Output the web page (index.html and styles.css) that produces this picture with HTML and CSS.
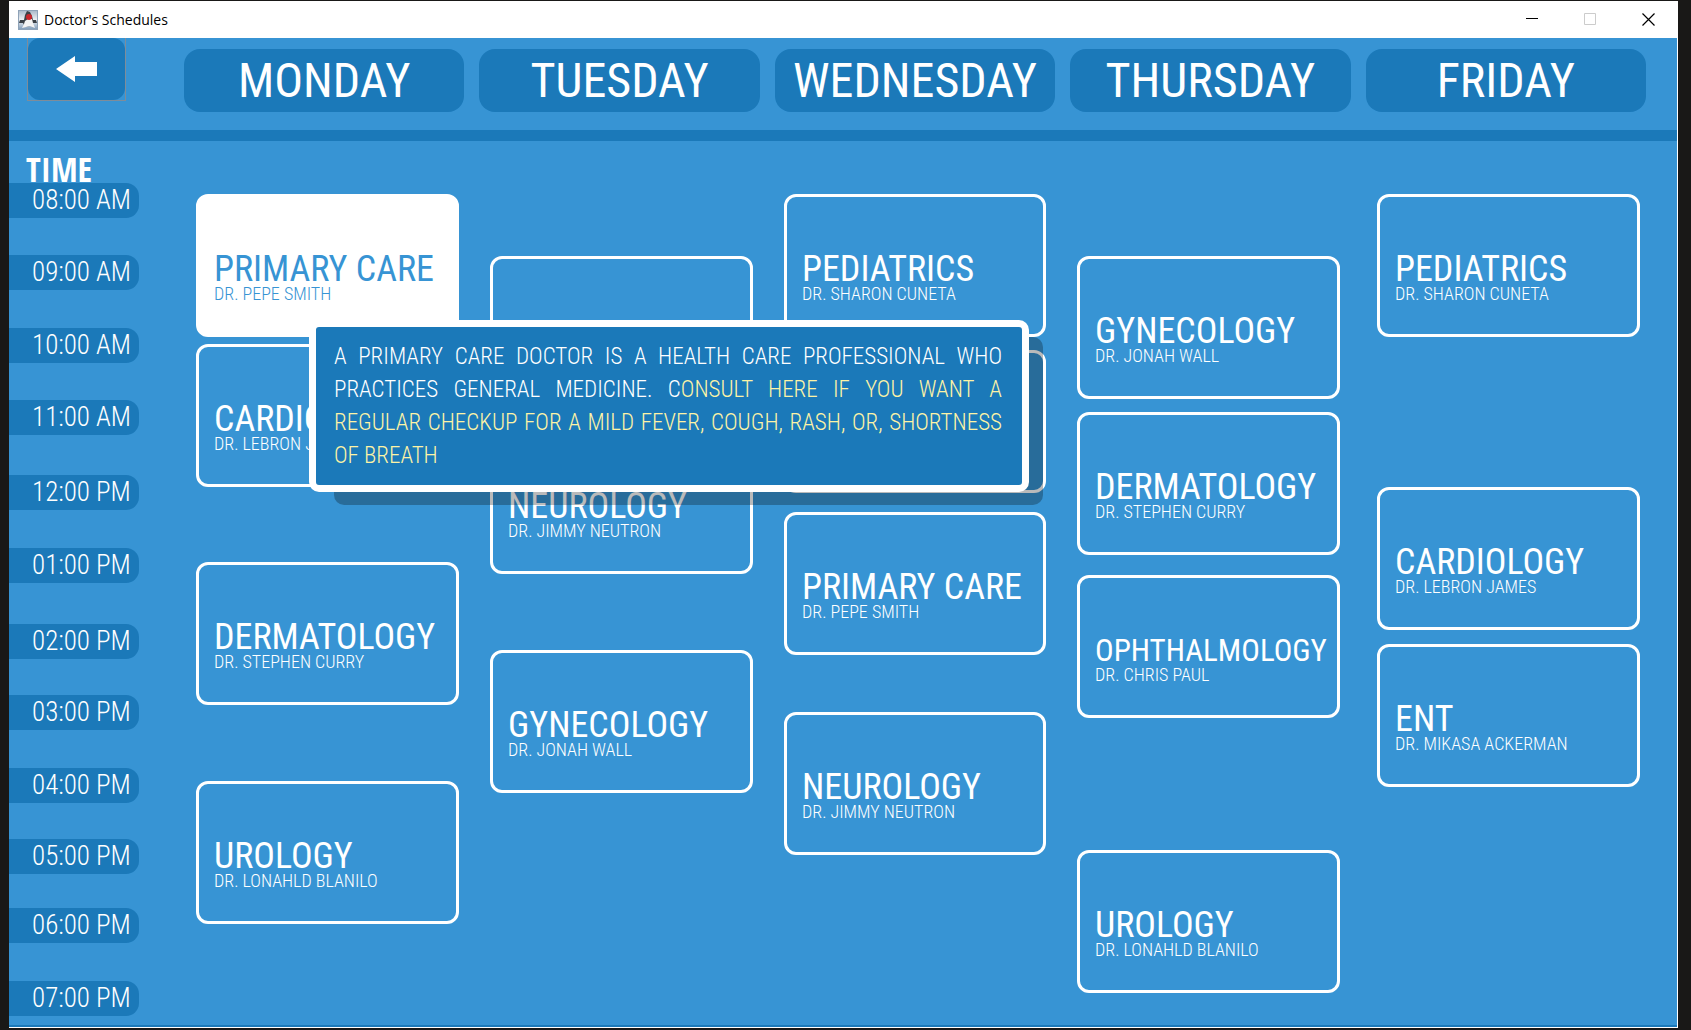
FILE: index.html
```html
<!DOCTYPE html>
<html lang="en">
<head>
<meta charset="utf-8">
<title>Doctor's Schedules</title>
<link rel="stylesheet" href="styles.css">
</head>
<body>
<div class="window">
  <header class="titlebar">
    <svg class="app-icon" viewBox="0 0 20 20" aria-hidden="true">
      <defs><linearGradient id="tile" x1="0" y1="0" x2="0" y2="1"><stop offset="0" stop-color="#a9b8c8"/><stop offset=".5" stop-color="#eef1f4"/><stop offset="1" stop-color="#7f9bb8"/></linearGradient></defs>
      <rect x=".5" y=".5" width="19" height="19" fill="url(#tile)" stroke="#8fa3b8"/>
      <path d="M9 1 12 2 14 6 15 10 18 10 19 13 15 13 12 16 7 17 5 13 1 13 2 10 6 10 7 5Z" fill="#3b4046"/>
      <path d="M7 11 10 9 14 9 15 13 17 18 12 16 8 17 4 18 6 14Z" fill="#f4f4f4"/>
      <circle cx="11" cy="7" r="3" fill="#c9252b"/>
    </svg>
    <h1 class="title">Doctor's Schedules</h1>
    <div class="controls">
      <button class="control" type="button" aria-label="Minimize"><svg viewBox="0 0 13 13"><path d="M0 5.500h12" stroke="#000"/></svg></button>
      <button class="control" type="button" aria-label="Maximize" disabled><svg viewBox="0 0 13 13"><path d="M.5 .5h11v11h-11z" fill="none" stroke="#ccc"/></svg></button>
      <button class="control" type="button" aria-label="Close"><svg viewBox="0 0 13 13"><path d="M.5 .5l12 12M12.500 .5l-12 12" stroke="#000" stroke-width="1.200"/></svg></button>
    </div>
  </header>
  <main class="content">
    <div class="toolbar">
      <div class="back-frame">
        <button class="back" type="button" aria-label="Back"><svg viewBox="0 0 42 28"><path d="M0 14 19 1v6h22v14H19v6z" fill="#fff"/></svg></button>
      </div>
      <div class="days">
        <h2 class="day-name">MONDAY</h2>
        <h2 class="day-name">TUESDAY</h2>
        <h2 class="day-name">WEDNESDAY</h2>
        <h2 class="day-name">THURSDAY</h2>
        <h2 class="day-name">FRIDAY</h2>
      </div>
    </div>
    <div class="schedule">
      <div class="times">
        <div class="time-label">TIME</div>
        <div class="time" style="--start:43">08:00 AM</div>
        <div class="time" style="--start:115">09:00 AM</div>
        <div class="time" style="--start:188">10:00 AM</div>
        <div class="time" style="--start:260">11:00 AM</div>
        <div class="time" style="--start:335">12:00 PM</div>
        <div class="time" style="--start:408">01:00 PM</div>
        <div class="time" style="--start:484">02:00 PM</div>
        <div class="time" style="--start:555">03:00 PM</div>
        <div class="time" style="--start:628">04:00 PM</div>
        <div class="time" style="--start:699">05:00 PM</div>
        <div class="time" style="--start:768">06:00 PM</div>
        <div class="time" style="--start:841">07:00 PM</div>
      </div>
      <div class="board">
        <div class="day">
          <button type="button" class="card active" style="--start:54"><span class="dept">PRIMARY CARE</span><span class="doctor">DR. PEPE SMITH</span></button>
          <button type="button" class="card" style="--start:204"><span class="dept">CARDIOLOGY</span><span class="doctor">DR. LEBRON JAMES</span></button>
          <button type="button" class="card" style="--start:422"><span class="dept">DERMATOLOGY</span><span class="doctor">DR. STEPHEN CURRY</span></button>
          <button type="button" class="card" style="--start:641"><span class="dept">UROLOGY</span><span class="doctor">DR. LONAHLD BLANILO</span></button>
        </div>
        <div class="day">
          <button type="button" class="card" style="--start:116" aria-label="Tuesday clinic"></button>
          <button type="button" class="card" style="--start:291"><span class="dept">NEUROLOGY</span><span class="doctor">DR. JIMMY NEUTRON</span></button>
          <button type="button" class="card" style="--start:510"><span class="dept">GYNECOLOGY</span><span class="doctor">DR. JONAH WALL</span></button>
        </div>
        <div class="day">
          <button type="button" class="card" style="--start:54"><span class="dept">PEDIATRICS</span><span class="doctor">DR. SHARON CUNETA</span></button>
          <button type="button" class="card" style="--start:210" aria-label="Wednesday clinic"></button>
          <button type="button" class="card" style="--start:372"><span class="dept">PRIMARY CARE</span><span class="doctor">DR. PEPE SMITH</span></button>
          <button type="button" class="card" style="--start:572"><span class="dept">NEUROLOGY</span><span class="doctor">DR. JIMMY NEUTRON</span></button>
        </div>
        <div class="day">
          <button type="button" class="card" style="--start:116"><span class="dept">GYNECOLOGY</span><span class="doctor">DR. JONAH WALL</span></button>
          <button type="button" class="card" style="--start:272"><span class="dept">DERMATOLOGY</span><span class="doctor">DR. STEPHEN CURRY</span></button>
          <button type="button" class="card" style="--start:435"><span class="dept long">OPHTHALMOLOGY</span><span class="doctor">DR. CHRIS PAUL</span></button>
          <button type="button" class="card" style="--start:710"><span class="dept">UROLOGY</span><span class="doctor">DR. LONAHLD BLANILO</span></button>
        </div>
        <div class="day">
          <button type="button" class="card" style="--start:54"><span class="dept">PEDIATRICS</span><span class="doctor">DR. SHARON CUNETA</span></button>
          <button type="button" class="card" style="--start:347"><span class="dept">CARDIOLOGY</span><span class="doctor">DR. LEBRON JAMES</span></button>
          <button type="button" class="card" style="--start:504"><span class="dept">ENT</span><span class="doctor">DR. MIKASA ACKERMAN</span></button>
        </div>
      </div>
      <div class="tooltip" role="tooltip">
        <p>A PRIMARY CARE DOCTOR IS A HEALTH CARE PROFESSIONAL WHO PRACTICES GENERAL MEDICINE. C<em>ONSULT HERE IF YOU WANT A REGULAR CHECKUP FOR A MILD FEVER, COUGH, RASH, OR, SHORTNESS OF BREATH</em></p>
      </div>
    </div>
  </main>
</div>
</body>
</html>
```
FILE: styles.css
```css
:root {
  --sky: #3794d4;
  --deep: #1b79b9;
}

* {
  box-sizing: border-box;
}

body {
  margin: 0;
  min-height: 100vh;
  padding: 1px 13px 2px 9px;
  display: flex;
  background: #191817;
  font-family: "Roboto Condensed", Roboto, sans-serif;
  color: #fff;
}

button {
  margin: 0;
  padding: 0;
  border: 0;
  background: none;
  font: inherit;
  color: inherit;
}

.window {
  flex: 1;
  display: flex;
  flex-direction: column;
  background: #fff;
  padding: 0 1px 1px 0;
}

.titlebar {
  height: 37px;
  display: flex;
  align-items: center;
  gap: 6px;
  padding-left: 9px;
}

.app-icon {
  width: 20px;
  height: 20px;
}

.title {
  flex: 1;
  margin: 0;
  font: 400 14px/20px "Open Sans", sans-serif;
  color: #000;
}

.controls {
  display: flex;
}

.control {
  width: 58px;
  height: 37px;
  display: grid;
  place-items: center;
}

.control svg {
  width: 13px;
  height: 13px;
}

.content {
  flex: 1;
  display: flex;
  flex-direction: column;
  background: var(--sky);
  border-bottom: 2px solid var(--deep);
}

.toolbar {
  display: flex;
  height: 103px;
  padding: 0 31px 0 18px;
  gap: 58px;
  border-bottom: 11px solid var(--deep);
}

.back-frame {
  width: 99px;
  height: 63px;
  border: 1px solid #7f8c99;
  border-top: 0;
}

.back {
  width: 100%;
  height: 100%;
  display: grid;
  place-items: center;
  border-radius: 12px;
  background: var(--deep);
}

.back svg {
  width: 42px;
  height: 28px;
}

.days {
  flex: 1;
  display: grid;
  grid-template-columns: repeat(5, 1fr);
  gap: 15px;
  padding-top: 11px;
}

.day-name {
  margin: 0;
  height: 63px;
  border-radius: 16px;
  background: var(--deep);
  font-size: 48px;
  line-height: 63px;
  font-weight: 400;
  text-align: center;
}

.schedule {
  flex: 1;
  position: relative;
  display: flex;
  padding-right: 37px;
}

.times {
  width: 187px;
  display: grid;
  grid-template-columns: 130px;
  grid-auto-rows: 1px;
}

.time-label {
  grid-row: 10 / span 38;
  grid-column: 1;
  padding-left: 17px;
  font-family: "Open Sans Condensed", "Roboto Condensed", sans-serif;
  font-size: 34px;
  line-height: 38px;
  font-weight: 700;
}

.time {
  grid-column: 1;
  grid-row: var(--start) / span 35;
  padding-left: 23px;
  border-radius: 0 13px 13px 0;
  background: var(--deep);
  font-size: 27px;
  line-height: 35px;
  font-weight: 300;
  white-space: nowrap;
}

.board {
  flex: 1;
  display: grid;
  grid-template-columns: 294fr 294fr 293fr 300fr 263fr;
}

.day {
  min-width: 0;
  display: grid;
  grid-template-columns: minmax(0, 1fr);
  grid-auto-rows: 1px;
  padding-right: 31px;
}

.day:nth-child(4) {
  padding-right: 37px;
}

.day:last-child {
  padding-right: 0;
}

.card {
  grid-row: var(--start) / span 143;
  display: flex;
  flex-direction: column;
  align-items: flex-start;
  padding: 55px 0 0 15px;
  border: 3px solid #fff;
  border-radius: 12px;
  text-align: left;
  white-space: nowrap;
}

.card.active {
  background: #fff;
  color: var(--sky);
}

.dept {
  font-size: 36px;
  line-height: 35px;
}

.dept.long {
  font-size: 31px;
}

.doctor {
  font-size: 18px;
  line-height: 14px;
  font-weight: 300;
}

.tooltip {
  position: absolute;
  isolation: isolate;
  top: 179px;
  left: 300px;
  right: 648px;
}

.tooltip::before {
  content: "";
  position: absolute;
  z-index: -1;
  inset: 17px -14px -13px 25px;
  border-radius: 10px;
  background: rgb(0 0 0 / 27%);
}

.tooltip p {
  margin: 0;
  padding: 13px 20px 13px 18px;
  border: 7px solid #fff;
  border-radius: 10px;
  background: var(--deep);
  font-size: 23px;
  line-height: 33px;
  font-weight: 300;
  text-align: justify;
}

.tooltip em {
  font-style: normal;
  color: #fdf3a6;
}
```
